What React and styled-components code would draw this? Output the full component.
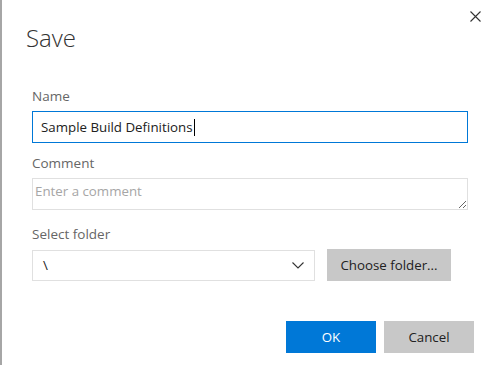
import React from "react"
import styled, { createGlobalStyle } from "styled-components"

const GlobalStyle = createGlobalStyle`
    html, body {
        margin: 0;
        padding: 0;
        background: #fff;
    }
    body {
        font-family: "Open Sans", "Noto Sans", sans-serif;
        color: #333;
    }
`

const Dialog = styled.div`
    box-sizing: border-box;
    width: 497px;
    height: 365px;
    border-left: 2px solid #a6a6a6;
    background: #fff;
    display: flex;
    flex-direction: column;
`

const Header = styled.div`
    display: flex;
    justify-content: space-between;
    align-items: flex-start;
    padding: 0 16px 0 24px;
`

const Title = styled.h1`
    margin: 23px 0 0;
    font-size: 24px;
    font-weight: 300;
    line-height: 30px;
    color: #333;
`

const CloseButton = styled.button`
    margin-top: 10px;
    width: 12px;
    height: 12px;
    padding: 0;
    border: none;
    background: transparent;
    display: flex;
    align-items: center;
    justify-content: center;
    cursor: pointer;
`

const Body = styled.div`
    padding: 33px 29px 0 30px;
    display: flex;
    flex-direction: column;
`

const Field = styled.div`
    display: flex;
    flex-direction: column;
    margin-bottom: ${p => p.$gap || 0}px;
`

const Label = styled.label`
    font-size: 13.5px;
    line-height: 20px;
    color: #666;
    margin-bottom: 5px;
`

const NameBox = styled.div`
    box-sizing: border-box;
    height: 32px;
    border: 1px solid #0078d7;
    padding: 0 8px;
    display: flex;
    align-items: center;
    font-size: 13.3px;
    color: #212121;
`

const Caret = styled.span`
    display: inline-block;
    width: 1px;
    height: 17px;
    background: #000;
    margin-left: 1px;
`

const CommentArea = styled.textarea`
    display: block;
    box-sizing: border-box;
    height: 32px;
    width: 100%;
    border: 1px solid #e0e0e0;
    padding: 3px 2px;
    font-family: "Open Sans", "Noto Sans", sans-serif;
    font-size: 13.3px;
    line-height: 18px;
    color: #212121;
    resize: vertical;
    outline: none;
    &::placeholder {
        color: #a6a6a6;
    }
`

const FolderRow = styled.div`
    display: flex;
    align-items: center;
    gap: 12px;
`

const SelectBox = styled.div`
    box-sizing: border-box;
    width: 283px;
    height: 31px;
    border: 1px solid #e0e0e0;
    padding: 0 10px 0 10px;
    display: flex;
    align-items: center;
    justify-content: space-between;
    font-size: 13.3px;
    color: #212121;
`

const GrayButton = styled.button`
    box-sizing: border-box;
    height: 32px;
    width: ${p => p.$width}px;
    border: none;
    background: ${p => (p.$primary ? "#0078d7" : "#c8c8c8")};
    color: ${p => (p.$primary ? "#fff" : "#212121")};
    font-family: "Open Sans", "Noto Sans", sans-serif;
    font-size: 13.3px;
    padding: 0;
    cursor: pointer;
`

const Footer = styled.div`
    margin-top: 40px;
    padding-right: 23px;
    display: flex;
    justify-content: flex-end;
    gap: 8px;
`

const CloseIcon = () => (
    <svg width="11" height="11" viewBox="0 0 11 11">
        <path d="M0.5 0.5 L10.5 10.5 M10.5 0.5 L0.5 10.5" stroke="#333" strokeWidth="1.1" fill="none" />
    </svg>
)

const Chevron = () => (
    <svg width="12" height="7" viewBox="0 0 12 7">
        <polyline points="0.5,0.5 6,6 11.5,0.5" stroke="#333" strokeWidth="1.1" fill="none" />
    </svg>
)

export default function App() {
    return (
        <>
            <GlobalStyle />
            <Dialog>
                <Header>
                    <Title>Save</Title>
                    <CloseButton aria-label="Close">
                        <CloseIcon />
                    </CloseButton>
                </Header>

                <Body>
                    <Field $gap={10}>
                        <Label>Name</Label>
                        <NameBox>
                            Sample Build Definitions
                            <Caret />
                        </NameBox>
                    </Field>

                    <Field $gap={14}>
                        <Label>Comment</Label>
                        <CommentArea placeholder="Enter a comment" />
                    </Field>

                    <Field>
                        <Label>Select folder</Label>
                        <FolderRow>
                            <SelectBox>
                                <span>\</span>
                                <Chevron />
                            </SelectBox>
                            <GrayButton $width={124}>Choose folder...</GrayButton>
                        </FolderRow>
                    </Field>
                </Body>

                <Footer>
                    <GrayButton $primary $width={90}>OK</GrayButton>
                    <GrayButton $width={90}>Cancel</GrayButton>
                </Footer>
            </Dialog>
        </>
    )
}
